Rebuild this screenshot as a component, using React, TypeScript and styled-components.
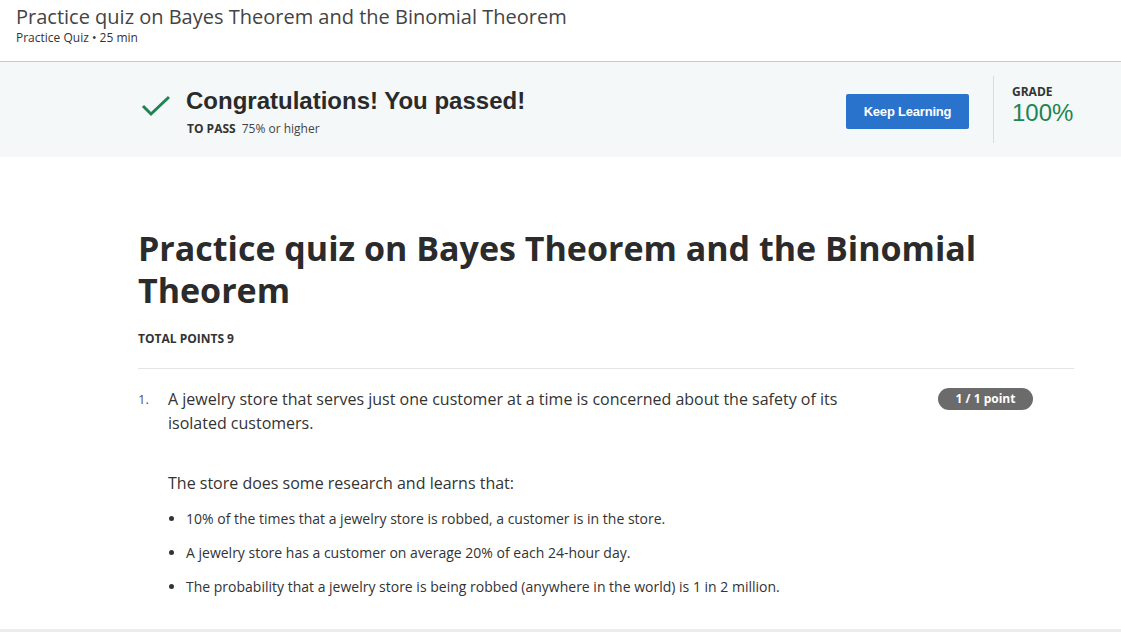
import React from "react";
import styled, { createGlobalStyle } from "styled-components";

const Global = createGlobalStyle`
  html, body { margin: 0; padding: 0; background: #fff; }
  body { font-family: "Open Sans", "Liberation Sans", sans-serif; color: #333; }
  * { box-sizing: border-box; }
`;

const Page = styled.div`
  width: 1121px;
  height: 632px;
  overflow: hidden;
  display: flex;
  flex-direction: column;
`;

const Header = styled.header`
  height: 62px;
  padding: 3px 16px 0;
  border-bottom: 1px solid #c8c8c8;
`;

const HeaderTitle = styled.h2`
  margin: 0;
  font-size: 20px;
  font-weight: 400;
  line-height: 27px;
  color: #444;
`;

const HeaderMeta = styled.div`
  font-size: 12px;
  line-height: 15px;
  color: #333;
`;

const Banner = styled.section`
  height: 95px;
  background: #f4f8f8;
  display: flex;
  align-items: center;
  padding-left: 141px;
`;

const CheckIcon = styled.svg`
  width: 30px;
  height: 24px;
  flex: none;
  margin-top: -8px;
`;

const PassText = styled.div`
  margin-left: 15px;
  display: flex;
  flex-direction: column;
  margin-top: 4px;
`;

const PassTitle = styled.div`
  font-family: "Liberation Sans", Arial, sans-serif;
  font-weight: 700;
  font-size: 24px;
  line-height: 28px;
  color: #2a2a2a;
`;

const PassMeta = styled.div`
  margin-top: 6px;
  margin-left: 1px;
  font-size: 12px;
  line-height: 16px;
  color: #444;
  strong { font-weight: 700; color: #333; margin-right: 6px; }
`;

const Spacer = styled.div`
  flex: 1;
`;

const KeepButton = styled.button`
  width: 123px;
  height: 35px;
  border: none;
  border-radius: 2px;
  background: #2a73cc;
  color: #fff;
  font-family: "Liberation Sans", Arial, sans-serif;
  font-weight: 700;
  font-size: 13px;
  letter-spacing: -0.2px;
  margin-top: 3px;
  cursor: pointer;
`;

const VDivider = styled.div`
  width: 1px;
  height: 67px;
  background: #dcdcdc;
  margin-left: 24px;
`;

const Grade = styled.div`
  width: 127px;
  padding-left: 18px;
  display: flex;
  flex-direction: column;
  margin-top: -10px;
`;

const GradeLabel = styled.div`
  font-size: 12px;
  font-weight: 700;
  line-height: 16px;
  color: #333;
`;

const GradeValue = styled.div`
  font-family: "Liberation Sans", Arial, sans-serif;
  font-size: 24px;
  line-height: 26px;
  color: #1f8354;
`;

const Main = styled.main`
  flex: 1;
  padding: 70px 47px 0 138px;
`;

const QuizTitle = styled.h1`
  margin: 0;
  font-size: 34px;
  font-weight: 700;
  line-height: 42px;
  color: #2b2b2b;
`;

const TotalPoints = styled.div`
  margin-top: 20px;
  font-size: 12px;
  font-weight: 700;
  line-height: 16px;
  color: #333;
`;

const Rule = styled.hr`
  margin: 21px 0 0;
  border: none;
  border-top: 1px solid #e5e5e5;
`;

const QuestionRow = styled.div`
  display: flex;
  align-items: flex-start;
  margin-top: 18px;
`;

const QNumber = styled.div`
  width: 30px;
  flex: none;
  font-size: 13px;
  line-height: 24px;
  color: #555;
`;

const QBody = styled.div`
  flex: 1;
  max-width: 700px;
`;

const Para = styled.p`
  margin: 0;
  font-size: 16px;
  line-height: 24px;
  color: #333;
`;

const Lead = styled(Para)`
  margin-top: 36px;
`;

const Bullets = styled.ul`
  margin: 15px 0 0;
  padding-left: 18px;
`;

const Bullet = styled.li`
  font-size: 14px;
  line-height: 18px;
  color: #333;
  margin-bottom: 16px;
`;

const Badge = styled.div`
  flex: none;
  margin-left: auto;
  margin-right: 41px;
  margin-top: 1px;
  height: 22px;
  width: 95px;
  border-radius: 11px;
  background: #6b6b6b;
  color: #fff;
  font-size: 12px;
  font-weight: 700;
  line-height: 22px;
  text-align: center;
`;

const BottomBar = styled.div`
  height: 3px;
  background: #ececec;
`;

export default function App() {
  return (
    <Page>
      <Global />
      <Header>
        <HeaderTitle>Practice quiz on Bayes Theorem and the Binomial Theorem</HeaderTitle>
        <HeaderMeta>Practice Quiz • 25 min</HeaderMeta>
      </Header>
      <Banner>
        <CheckIcon viewBox="0 0 30 24">
          <polyline points="2,12 10,20 28,3" fill="none" stroke="#1f8354" strokeWidth="3" />
        </CheckIcon>
        <PassText>
          <PassTitle>Congratulations! You passed!</PassTitle>
          <PassMeta>
            <strong>TO PASS</strong>75% or higher
          </PassMeta>
        </PassText>
        <Spacer />
        <KeepButton>Keep Learning</KeepButton>
        <VDivider />
        <Grade>
          <GradeLabel>GRADE</GradeLabel>
          <GradeValue>100%</GradeValue>
        </Grade>
      </Banner>
      <Main>
        <QuizTitle>Practice quiz on Bayes Theorem and the Binomial Theorem</QuizTitle>
        <TotalPoints>TOTAL POINTS 9</TotalPoints>
        <Rule />
        <QuestionRow>
          <QNumber>1.</QNumber>
          <QBody>
            <Para>
              A jewelry store that serves just one customer at a time is concerned about the safety of its isolated customers.
            </Para>
            <Lead>The store does some research and learns that:</Lead>
            <Bullets>
              <Bullet>10% of the times that a jewelry store is robbed, a customer is in the store.</Bullet>
              <Bullet>A jewelry store has a customer on average 20% of each 24-hour day.</Bullet>
              <Bullet>The probability that a jewelry store is being robbed (anywhere in the world) is 1 in 2 million.</Bullet>
            </Bullets>
          </QBody>
          <Badge>1 / 1 point</Badge>
        </QuestionRow>
      </Main>
      <BottomBar />
    </Page>
  );
}
